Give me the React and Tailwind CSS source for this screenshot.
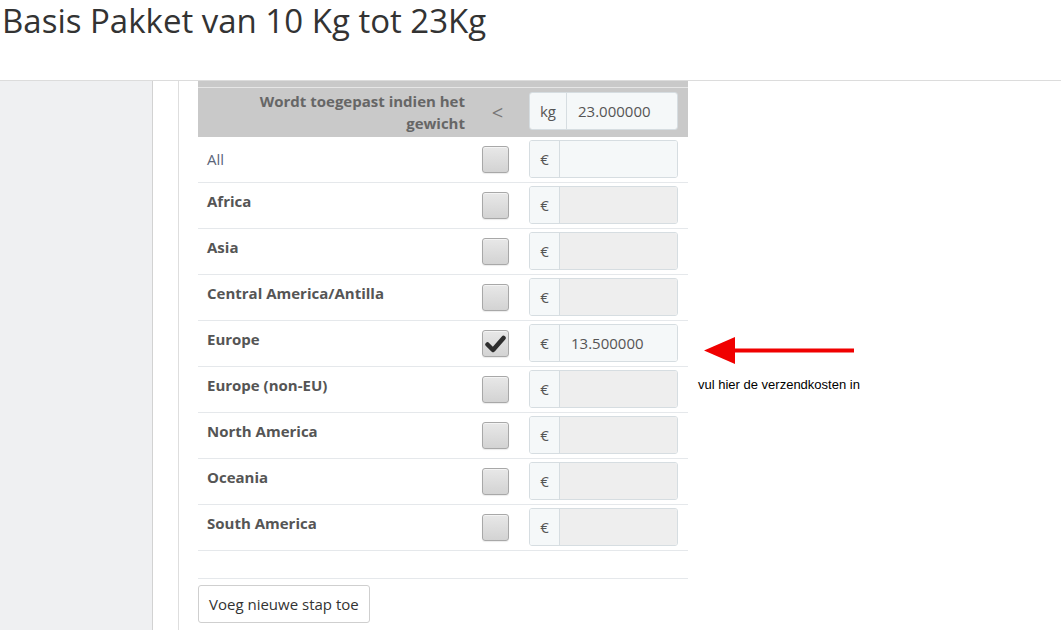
import React from 'react';

const zones = [
  { name: 'All', bold: false, enabled: true, value: '' },
  { name: 'Africa', bold: true, enabled: false, value: '' },
  { name: 'Asia', bold: true, enabled: false, value: '' },
  { name: 'Central America/Antilla', bold: true, enabled: false, value: '' },
  { name: 'Europe', bold: true, enabled: true, checked: true, value: '13.500000' },
  { name: 'Europe (non-EU)', bold: true, enabled: false, value: '' },
  { name: 'North America', bold: true, enabled: false, value: '' },
  { name: 'Oceania', bold: true, enabled: false, value: '' },
  { name: 'South America', bold: true, enabled: false, value: '' }
];

const Checkbox = ({ checked }) => (
  <div className="w-[27px] h-[27px] rounded-[3px] border border-[#a8a8a8] bg-linear-to-b from-[#e8e8e8] to-[#d3d3d3] shadow-[inset_0_1px_0_#f4f4f4,0_1px_1px_rgba(0,0,0,0.08)] flex items-center justify-center">
    {checked && (
      <svg width="21" height="18" viewBox="0 0 21 18">
        <path d="M2.5 9.5 L8 15 L18.5 3" fill="none" stroke="#2e2e2e" strokeWidth="4.5" strokeLinecap="round" strokeLinejoin="round" />
      </svg>
    )}
  </div>
);

const InputGroup = ({ addon, addonWidth, value, enabled }) => (
  <div className="flex h-[38px] w-[149px] rounded-[3px] border border-[#d6dde1] overflow-hidden text-[15px] text-[#555]">
    <div className={`${addonWidth} bg-[#f5f8f9] border-r border-[#d6dde1] flex items-center justify-center shrink-0`}>
      {addon}
    </div>
    <div className={`flex-1 flex items-center pl-[11px] ${enabled ? 'bg-[#f5f8f9]' : 'bg-[#eeeeee]'}`}>
      {value}
    </div>
  </div>
);

const HeaderLabel = () => (
  <div className="w-[277px] pr-[10px] text-right font-bold text-[15px] leading-[22px] text-[#666] pl-[40px]">
    Wordt toegepast indien het gewicht
  </div>
);

const App = () => {
  return (
    <div className="relative w-[1061px] h-[630px] overflow-hidden bg-white font-['Open_Sans',sans-serif]">
      <header className="h-[81px] border-b border-[#dcdcdc]">
        <h1 className="pl-[2px] pt-[1px] text-[33px] leading-[40px] text-[#333] font-normal">
          Basis Pakket van 10 Kg tot 23Kg
        </h1>
      </header>

      <div className="flex h-[549px]">
        <aside className="w-[153px] bg-[#eff0f2] border-r border-[#d2d2d2]" />
        <div className="w-[26px] border-r border-[#dedede]" />

        <main className="pl-[19px]">
          <div className="w-[490px]">
            {/* previous step, scrolled out */}
            <div className="h-[7px] bg-[#c9c9c9] border-b border-[#e6e6e6] overflow-hidden">
              <div className="-mt-[45px] flex">
                <HeaderLabel />
              </div>
            </div>

            <div className="h-[49px] bg-[#c9c9c9] flex">
              <div className="pt-[2px]">
                <HeaderLabel />
              </div>
              <div className="w-[45px] flex items-center justify-center text-[20px] text-[#777]">&lt;</div>
              <div className="flex-1 pl-[9px] pt-[4px]">
                <InputGroup addon="kg" addonWidth="w-[37px]" value="23.000000" enabled />
              </div>
            </div>

            {zones.map((zone) => (
              <div key={zone.name} className="h-[46px] flex border-b border-[#e5e8eb]">
                <div className={`w-[277px] pl-[9px] text-[15px] leading-[20px] ${zone.bold ? 'pt-[8px] font-bold text-[#555]' : 'pt-[12px] text-[#5b6579]'}`}>
                  {zone.name}
                </div>
                <div className="w-[45px] pl-[7px] pt-[9px]">
                  <Checkbox checked={zone.checked} />
                </div>
                <div className="flex-1 pl-[9px] pt-[3px]">
                  <InputGroup addon="€" addonWidth="w-[30px]" value={zone.value} enabled={zone.enabled} />
                </div>
              </div>
            ))}

            <div className="h-[28px] border-b border-[#e5e8eb]" />

            <button className="mt-[6px] h-[38px] px-[10px] border border-[#cfcfcf] rounded-[3px] bg-white text-[15px] text-[#333]">
              Voeg nieuwe stap toe
            </button>
          </div>
        </main>
      </div>

      {/* annotation */}
      <svg className="absolute left-[704px] top-[336px]" width="152" height="29" viewBox="0 0 152 29">
        <polygon points="0,14.5 31,1 31,28" fill="#f00000" />
        <rect x="30" y="12.5" width="120" height="4" fill="#f00000" />
      </svg>
      <div className="absolute left-[698px] top-[377px] font-['Liberation_Sans',Arial,sans-serif] text-[13px] leading-[16px] text-black">
        vul hier de verzendkosten in
      </div>
    </div>
  );
};

export default App;
